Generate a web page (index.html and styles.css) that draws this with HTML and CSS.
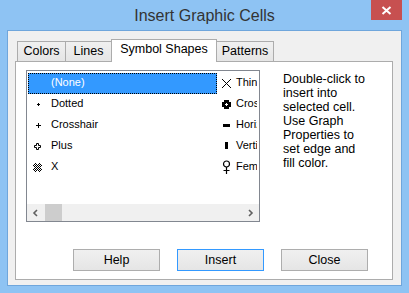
FILE: index.html
```html
<!DOCTYPE html>
<html lang="en">
<head>
    <meta charset="UTF-8">
    <title>Insert Graphic Cells</title>
    <link rel="stylesheet" href="styles.css">
</head>
<body>

    <div class="window">
        <div class="titlebar">
            <span></span>
            <span class="title">Insert Graphic Cells</span>
            <span class="close-btn">
                <svg width="11" height="9" viewBox="0 0 11 9"><path d="M1.5 1 L9.5 8 M9.5 1 L1.5 8" stroke="#fff" stroke-width="2"/></svg>
            </span>
        </div>

        <div class="client">
            <!-- Tab strip -->
            <div class="tabs">
                <div class="tab tab-colors">Colors</div>
                <div class="tab tab-lines">Lines</div>
                <div class="tab tab-shapes selected">Symbol Shapes</div>
                <div class="tab tab-patterns">Patterns</div>
            </div>

            <div class="panel">
                <div class="panel-top">
                    <div class="listbox">
                        <div class="list-cols">
                            <div class="list-col">
                                <div class="item selected"><span class="ico"></span><span class="label">(None)</span></div>
                                <div class="item">
                                    <span class="ico"><svg width="11" height="11" viewBox="0 0 11 11" shape-rendering="crispEdges"><rect x="6" y="4" width="1" height="3"/><rect x="5" y="5" width="3" height="1"/></svg></span>
                                    <span class="label">Dotted</span>
                                </div>
                                <div class="item">
                                    <span class="ico"><svg width="11" height="11" viewBox="0 0 11 11" shape-rendering="crispEdges"><rect x="6" y="3" width="1" height="5"/><rect x="4" y="5" width="5" height="1"/></svg></span>
                                    <span class="label">Crosshair</span>
                                </div>
                                <div class="item">
                                    <span class="ico"><svg width="11" height="11" viewBox="0 0 11 11"><path d="M4.5 2.5h2v2h2v2h-2v2h-2v-2h-2v-2h2z" fill="#fff" stroke="#000" stroke-width="1"/></svg></span>
                                    <span class="label">Plus</span>
                                </div>
                                <div class="item">
                                    <span class="ico"><svg width="11" height="11" viewBox="0 0 11 11" shape-rendering="crispEdges"><defs><pattern id="chk" width="2" height="2" patternUnits="userSpaceOnUse"><rect width="1" height="1"/><rect x="1" y="1" width="1" height="1"/></pattern></defs><path d="M2 2 L9 9 M9 2 L2 9" stroke="url(#chk)" stroke-width="3"/></svg></span>
                                    <span class="label">X</span>
                                </div>
                            </div>
                            <div class="list-col list-col-2">
                                <div class="item">
                                    <span class="ico"><svg width="11" height="11" viewBox="0 0 11 11"><path d="M1 1 L10 10 M10 1 L1 10" stroke="#000" stroke-width="1"/></svg></span>
                                    <span class="label">Thin X</span>
                                </div>
                                <div class="item">
                                    <span class="ico"><svg width="11" height="11" viewBox="0 0 11 11" shape-rendering="crispEdges"><rect x="3" y="1" width="5" height="9" rx="1"/><rect x="1" y="3" width="9" height="5" rx="1"/><rect x="5" y="4" width="1" height="3" fill="#fff"/><rect x="4" y="5" width="3" height="1" fill="#fff"/></svg></span>
                                    <span class="label">Cross</span>
                                </div>
                                <div class="item">
                                    <span class="ico"><svg width="11" height="11" viewBox="0 0 11 11" shape-rendering="crispEdges"><rect x="2" y="4" width="7" height="3"/></svg></span>
                                    <span class="label">Horizontal</span>
                                </div>
                                <div class="item">
                                    <span class="ico"><svg width="11" height="11" viewBox="0 0 11 11" shape-rendering="crispEdges"><rect x="4" y="1" width="3" height="7"/></svg></span>
                                    <span class="label">Vertical</span>
                                </div>
                                <div class="item">
                                    <span class="ico"><svg width="11" height="15" viewBox="0 0 11 15"><circle cx="5.5" cy="4" r="3" fill="none" stroke="#000" stroke-width="1.2"/><path d="M5.5 7 V14 M2.5 10.5 H8.5" stroke="#000" stroke-width="1.2"/></svg></span>
                                    <span class="label">Female</span>
                                </div>
                            </div>
                        </div>
                        <!-- Horizontal scroll bar -->
                        <div class="hscroll">
                            <span class="scroll-btn"><svg width="7" height="8" viewBox="0 0 7 8"><path d="M5 1 L2 4 L5 7" fill="none" stroke="#606060" stroke-width="1.6"/></svg></span>
                            <span class="scroll-track"><span class="scroll-thumb"></span></span>
                            <span class="scroll-btn"><svg width="7" height="8" viewBox="0 0 7 8"><path d="M2 1 L5 4 L2 7" fill="none" stroke="#606060" stroke-width="1.6"/></svg></span>
                        </div>
                    </div>

                    <p class="hint">Double-click to<br>insert into<br>selected cell.<br>Use Graph<br>Properties to<br>set edge and<br>fill color.</p>
                </div>

                <div class="buttons">
                    <button class="btn">Help</button>
                    <button class="btn default">Insert</button>
                    <button class="btn">Close</button>
                </div>
            </div>
        </div>
    </div>

</body>
</html>
```

FILE: styles.css
```css
body {
    margin: 0;
    font-family: "Liberation Sans", Arial, sans-serif;
    color: #000;
}
.window {
    width: 409px;
    height: 293px;
    background-color: #8ec3f3;
    display: flex;
    flex-direction: column;
}
.titlebar {
    height: 30px;
    display: grid;
    grid-template-columns: 1fr auto 1fr;
}
.title {
    font-size: 16px;
    line-height: 30px;
    padding-top: 1px;
    color: #333;
}
.close-btn {
    justify-self: end;
    align-self: start;
    width: 31px;
    height: 20px;
    margin-right: 7px;
    background-color: #c75050;
    display: flex;
    justify-content: center;
    align-items: center;
}
.client {
    margin: 0 7px 7px;
    border: 1px solid #6fa6dc;
    background-color: #f0f0f0;
    padding: 8px 8px 5px 7px;
    flex: 1;
}
.tabs {
    height: 22px;
    display: flex;
    align-items: flex-end;
    padding-left: 2px;
}
.tab {
    box-sizing: border-box;
    height: 20px;
    border: 1px solid #acacac;
    border-bottom: none;
    background: linear-gradient(#f0f0f0, #e5e5e5);
    font-size: 12.5px;
    line-height: 19px;
    text-align: center;
    margin-left: -1px;
}
.tab-colors {
    width: 49px;
    margin-left: 0;
}
.tab-lines {
    width: 47px;
}
.tab-shapes {
    width: 106px;
}
.tab-patterns {
    width: 58px;
}
.tab.selected {
    height: 23px;
    margin-bottom: -1px;
    padding-bottom: 3px;
    background: #fff;
    position: relative;
    z-index: 1;
}
.panel {
    box-sizing: border-box;
    width: 378px;
    height: 219px;
    border: 1px solid #acacac;
    background-color: #fff;
    padding: 8px 0 0 10px;
}
.panel-top {
    display: flex;
    align-items: flex-start;
}
.listbox {
    box-sizing: border-box;
    width: 234px;
    height: 152px;
    border: 1px solid #828790;
    display: flex;
    flex-direction: column;
}
.list-cols {
    height: 131px;
    padding: 2px 0 0 1px;
    display: flex;
    overflow: hidden;
}
.list-col {
    width: 189px;
    flex-shrink: 0;
}
.list-col-2 {
    width: 40px;
    overflow: hidden;
}
.item {
    height: 21px;
    display: flex;
    align-items: center;
    white-space: nowrap;
    font-size: 11px;
    line-height: 19px;
}
.item .label {
    margin-bottom: 2px;
}
.item .ico {
    width: 23px;
    flex-shrink: 0;
    display: flex;
    padding-left: 4px;
    box-sizing: border-box;
}
.list-col-2 .ico {
    width: 19px;
    padding-left: 4px;
}
.item.selected {
    background-color: #3399ff;
    color: #fff;
    outline: 1px dotted #000;
    outline-offset: -1px;
}
.hscroll {
    height: 17px;
    background-color: #f0f0f0;
    display: flex;
}
.scroll-btn {
    width: 17px;
    display: flex;
    justify-content: center;
    align-items: center;
}
.scroll-track {
    flex: 1;
    display: flex;
}
.scroll-thumb {
    width: 17px;
    margin-left: 1px;
    background-color: #cdcdcd;
}
.hint {
    margin: 2px 0 0 23px;
    font-size: 12.5px;
    line-height: 14px;
}
.buttons {
    display: flex;
    gap: 17px;
    margin-top: 27px;
    padding-left: 47px;
}
.btn {
    box-sizing: border-box;
    width: 87px;
    height: 22px;
    border: 1px solid #adadad;
    background: linear-gradient(#f0f0f0, #e5e5e5);
    font-family: "Liberation Sans", Arial, sans-serif;
    font-size: 12.5px;
    color: #000;
    padding: 0;
}
.btn.default {
    border-color: #3399ff;
}
```
